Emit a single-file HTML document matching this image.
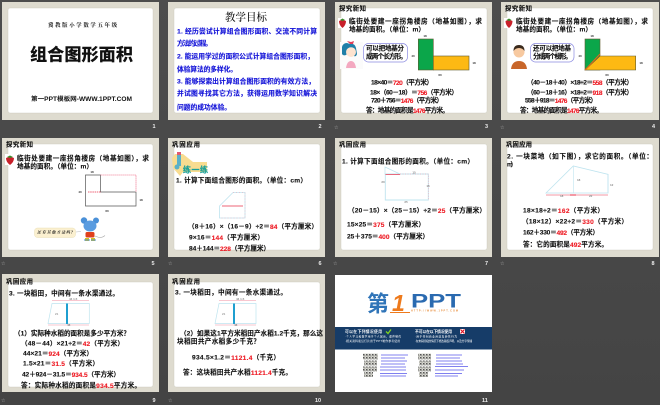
<!DOCTYPE html>
<html lang="zh"><head><meta charset="utf-8"><title>组合图形面积</title>
<style>
html,body{margin:0;padding:0;background:#484848;width:660px;height:405px;overflow:hidden}
svg{display:block;filter:blur(.3px)}
text{dominant-baseline:central;font-family:"Liberation Serif","Noto Serif CJK SC",serif;font-weight:700;fill:#111}
.s{font-family:"Liberation Sans","Noto Sans CJK SC",sans-serif}
.t{font-size:6.6px;font-family:"Liberation Sans","Noto Sans CJK SC",sans-serif;stroke:#111;stroke-width:.12px}
.h{font-size:6.4px;font-family:"Liberation Sans","Noto Sans CJK SC",sans-serif;stroke:#111;stroke-width:.12px}
.b{font-size:6.8px;fill:#1414d8;font-family:"Liberation Sans","Noto Sans CJK SC",sans-serif;stroke:#1414d8;stroke-width:.12px}
.n{font-family:"Liberation Sans",sans-serif;font-size:5.5px;fill:#eee}
.st{font-family:"Liberation Sans",sans-serif;font-size:5px;fill:#bbb;font-weight:400}
.l{font-size:3px;font-family:"Liberation Sans",sans-serif;fill:#333}
.r{fill:#ee1c25;stroke:#ee1c25}
.w{fill:#fff;font-family:"Liberation Sans","Noto Sans CJK SC",sans-serif}
</style></head><body>
<svg xmlns="http://www.w3.org/2000/svg" width="660" height="405" viewBox="0 0 660 405">
<defs><linearGradient id="bg" x1="0" y1="0" x2="0" y2="1"><stop offset="0" stop-color="#4d4d4d"/><stop offset="1" stop-color="#444"/></linearGradient>
<pattern id="qr" width="3" height="3" patternUnits="userSpaceOnUse"><rect width="3" height="3" fill="#d8d8d0"/><rect width="1.500" height="1.500" fill="#555"/><rect x="1.500" y="1.500" width="1" height="1" fill="#777"/></pattern></defs>
<rect width="660" height="405" fill="url(#bg)"/>
<!-- frames -->
<g fill="#dedbcf">
<rect x="2" y="2" width="157" height="118"/><rect x="168" y="2" width="157" height="118"/><rect x="335" y="2" width="157" height="118"/><rect x="501" y="2" width="158" height="118"/>
<rect x="2" y="138" width="157" height="119"/><rect x="168" y="138" width="157" height="119"/><rect x="335" y="138" width="157" height="119"/><rect x="501" y="138" width="158" height="119"/>
<rect x="2" y="274" width="157" height="118"/><rect x="168" y="274" width="157" height="118"/>
</g>
<g fill="#fff" stroke="#c9c6ba" stroke-width=".4">
<rect x="8" y="8" width="145" height="105" rx="2"/><rect x="174" y="8" width="146" height="105" rx="2"/><rect x="341" y="8" width="146" height="105" rx="2"/><rect x="507" y="8" width="146" height="105" rx="2"/>
<rect x="8" y="144" width="145" height="106" rx="2"/><rect x="174" y="144" width="146" height="106" rx="2"/><rect x="341" y="144" width="146" height="106" rx="2"/><rect x="507" y="144" width="146" height="106" rx="2"/>
<rect x="8" y="282" width="145" height="105" rx="2"/><rect x="174" y="282" width="146" height="105" rx="2"/>
</g>
<rect x="335" y="275" width="157" height="117" fill="#fff"/>
<!-- Slide 1 -->
<text x="48" y="26" font-size="5.4" textLength="69" lengthAdjust="spacing">冀教版小学数学五年级</text>
<text class="s" x="30" y="55" font-size="17" textLength="103" lengthAdjust="spacingAndGlyphs" style="font-weight:900">组合图形面积</text>
<text class="s" x="31" y="100" font-size="6" textLength="101" lengthAdjust="spacingAndGlyphs" fill="#222">第一PPT模板网-WWW.1PPT.COM</text>
<!-- Slide 2 -->
<text x="225" y="18" font-size="10.5" textLength="42" fill="#222" style="font-weight:500">教学目标</text>
<text class="b" x="177" y="32" textLength="140">1. 经历尝试计算组合图形面积、交流不同计算</text>
<text class="b" x="177" y="44" textLength="35">方法的过程。</text>
<text class="b" x="177" y="57" textLength="137">2. 能运用学过的面积公式计算组合图形面积，</text>
<text class="b" x="177" y="70" textLength="60">体验算法的多样化。</text>
<text class="b" x="177" y="82" textLength="138">3. 能够探索出计算组合图形面积的有效方法，</text>
<text class="b" x="177" y="94" textLength="140">并试图寻找其它方法，获得运用数学知识解决</text>
<text class="b" x="177" y="108" textLength="54">问题的成功体验。</text>
<!-- Slide 3 -->
<text class="h" x="339" y="9" textLength="27">探究新知</text>
<rect x="338" y="18" width="9" height="10" fill="#fff"/><path d="M339 21q3.500-2 7 0q0 4-3.500 7q-3.500-3-3.500-7z" fill="#c8202a"/><path d="M340 20l2.500-1.500l2.500 1.500l-2.500 1z" fill="#3a8a2a"/>
<text class="t" x="349" y="22" textLength="133">临街处要建一座拐角楼房（地基如图），求</text>
<text class="t" x="349" y="30" textLength="76">地基的面积。（单位：m）</text>
<rect x="340" y="42" width="23" height="27" fill="#fbfbfb"/>
<path d="M342 47q1-4 5-4l3 1q5-1 6 4l1 6q-1 3-3 2l-1-3q-2 1-5 0l-2 2q-3 1-4-1z" fill="#1f7fa8"/>
<circle cx="351" cy="52" r="5" fill="#fde3cf"/><path d="M346 50q4-5 10-1q-1-4-5-4t-5 5z" fill="#1f7fa8"/>
<path d="M350 44l-3-3l4 1l3-1l-1 3z" fill="#e0405a"/><path d="M346 68q1-7 5-7t5 7z" fill="#f3a8c0"/>
<rect x="363.500" y="43.500" width="44" height="18.500" rx="5" fill="#fff" stroke="#8a8ae0" stroke-width=".7"/>
<text class="t" x="366" y="49" textLength="38" font-size="6">可以把地基分</text>
<text class="t" x="366" y="57" textLength="41">成两个长方形。</text>
<rect x="418.300" y="39" width="15" height="31" fill="#0ba64a" stroke="#5f5a30" stroke-width=".6"/>
<rect x="433.300" y="56" width="35.700" height="14" fill="#fdb913" stroke="#5f5a30" stroke-width=".6"/>
<text class="l" x="425" y="36" text-anchor="middle">18</text><text class="l" x="413" y="56" text-anchor="middle">40</text><text class="l" x="474" y="63" text-anchor="middle">18</text><text class="l" x="440" y="75" text-anchor="middle">60</text>
<text class="t" x="371" y="83" textLength="62">18×40＝<tspan class="r">720</tspan>（平方米）</text>
<text class="t" x="370" y="93" textLength="88">18×（60－18）＝<tspan class="r">756</tspan>（平方米）</text>
<text class="t" x="371" y="101" textLength="72">720＋756＝<tspan class="r">1476</tspan>（平方米）</text>
<text class="t" x="366" y="111" textLength="83">答：地基的面积是<tspan class="r">1476</tspan>平方米。</text>
<!-- Slide 4 -->
<text class="h" x="505" y="9" textLength="27">探究新知</text>
<rect x="504" y="18" width="10" height="10" fill="#fff"/><path d="M505.500 21q3.500-2 7 0q0 4-3.500 7q-3.500-3-3.500-7z" fill="#c8202a"/><path d="M506.500 20l2.500-1.500l2.500 1.500l-2.500 1z" fill="#3a8a2a"/>
<text class="t" x="516" y="22" textLength="132">临街处要建一座拐角楼房（地基如图），求</text>
<text class="t" x="516" y="30" textLength="76">地基的面积。（单位：m）</text>
<circle cx="519" cy="52" r="5.500" fill="#f7c9a0"/><path d="M513.500 51q0-6 5.500-6t5.500 6q-2-3-5.500-3t-5.500 3z" fill="#3a2a1c"/><path d="M511 69q1-8 8-8t8 8z" fill="#c8662a"/>
<rect x="530.500" y="43.500" width="43.500" height="18.500" rx="5" fill="#fff" stroke="#8a8ae0" stroke-width=".7"/>
<text class="t" x="533" y="49" textLength="38">还可以把地基</text>
<text class="t" x="533" y="57" textLength="39">分成两个梯形。</text>
<rect x="585" y="39" width="15" height="31" fill="#0ba64a" stroke="#5f5a30" stroke-width=".6"/>
<path d="M600 56H635.700V70H585z" fill="#fdb913" stroke="#5f5a30" stroke-width=".6"/><path d="M600 54L585 70" stroke="#e06a1c" stroke-width="1.200"/>
<text class="l" x="592" y="36" text-anchor="middle">18</text><text class="l" x="580" y="56" text-anchor="middle">40</text><text class="l" x="641" y="63" text-anchor="middle">18</text><text class="l" x="607" y="75" text-anchor="middle">60</text>
<text class="t" x="527" y="83" textLength="106">（40－18＋40）×18÷2＝<tspan class="r">558</tspan>（平方米）</text>
<text class="t" x="527" y="93" textLength="106">（60－18＋16）×18÷2＝<tspan class="r">918</tspan>（平方米）</text>
<text class="t" x="525" y="101" textLength="72">558＋918＝<tspan class="r">1476</tspan>（平方米）</text>
<text class="t" x="520" y="111" textLength="83">答：地基的面积是<tspan class="r">1476</tspan>平方米。</text>
<!-- Slide 5 -->
<text class="h" x="6" y="145" textLength="27">探究新知</text>
<rect x="5" y="154" width="10" height="11" fill="#fff"/><path d="M6 158q4-2 8 0q0 4-4 7q-4-3-4-7z" fill="#c8202a"/><path d="M7 157l3-1.500l3 1.500l-3 1z" fill="#3a8a2a"/>
<text class="t" x="17" y="159" textLength="132">临街处要建一座拐角楼房（地基如图），求</text>
<text class="t" x="17" y="167" textLength="76">地基的面积。（单位：m）</text>
<path d="M85.500 175H100.500V192H136V206H85.500z" fill="#fff" stroke="#555" stroke-width=".7"/>
<path d="M100.500 175H136V192" fill="none" stroke="#f0708a" stroke-width=".8" stroke-dasharray="1.200 .8"/>
<path d="M88 192H100.500" stroke="#e8304a" stroke-width=".7" stroke-dasharray="1.500 .7"/>
<text class="l" x="92" y="172" text-anchor="middle">18</text><text class="l" x="80" y="192" text-anchor="middle">40</text><text class="l" x="141" y="200" text-anchor="middle">18</text><text class="l" x="107" y="211" text-anchor="middle">60</text>
<rect x="34.500" y="228" width="41" height="9.500" rx="3" fill="#fbf0d0" stroke="#e5d8a8" stroke-width=".4"/>
<text x="37" y="232.700" font-size="3.900" textLength="36" style="font-style:italic" fill="#555">还有其他方法吗?</text>
<path d="M76 232l5-.5" stroke="#bbb" stroke-width=".5"/>
<circle cx="84" cy="220.500" r="3.200" fill="#4a90d8"/><circle cx="96" cy="220.500" r="3" fill="#4a90d8"/><ellipse cx="90" cy="226" rx="6.500" ry="5.500" fill="#5a9ce0"/>
<rect x="85.500" y="232" width="9" height="5.500" rx="1.500" fill="#e0401c"/><path d="M85 238h4v3h-4zM91 238h4v3h-4z" fill="#d8c020"/>
<path d="M84 240h6M91 240h5" stroke="#4a90d8" stroke-width="1"/><path d="M95 236q6 3 10-.5" fill="none" stroke="#aaa" stroke-width=".6"/>
<!-- Slide 6 -->
<text class="h" x="172" y="145" textLength="28">巩固应用</text>
<path d="M172 158l3-4h8l10 8h14v10h-24l-3 4l-7-8z" fill="#f8dc90"/>
<path d="M177 152h4v14h-4z" fill="#5ab0c8"/><path d="M177 152h4v3h-4z" fill="#e05a70"/><circle cx="177" cy="167" r="2.500" fill="#5ab0c8"/>
<text x="183" y="170" font-size="8" textLength="25" style="fill:#1aa09a;stroke:#1aa09a;stroke-width:.2px" class="s">练一练</text>
<text class="t" x="176" y="181" textLength="131">1. 计算下面组合图形的面积。（单位：cm）</text>
<path d="M219.500 206L233 192.500H245V218H219.500z" fill="#fff" stroke="#bfe4ef" stroke-width=".8"/>
<path d="M233 192.500H245V218H219.500" fill="none" stroke="#f0a0b0" stroke-width=".5" stroke-dasharray="1 2"/>
<path d="M222 206H243" stroke="#e8304a" stroke-width=".8"/>
<text class="t" x="188" y="227" textLength="130">（8＋16）×（16－9）÷2＝<tspan class="r">84</tspan>（平方厘米）</text>
<text class="t" x="189" y="238" textLength="75">9×16＝<tspan class="r">144</tspan>（平方厘米）</text>
<text class="t" x="189" y="249" textLength="81">84＋144＝<tspan class="r">228</tspan>（平方厘米）</text>
<!-- Slide 7 -->
<text class="h" x="339" y="145" textLength="27">巩固应用</text>
<text class="t" x="342" y="162" textLength="132">1. 计算下面组合图形的面积。（单位：cm）</text>
<path d="M385 167L400 174H385z" fill="#fff" stroke="#bfe4ef" stroke-width=".7"/>
<path d="M385.300 174H428.300V200H385.300z" fill="#fff" stroke="#bfe4ef" stroke-width=".9"/>
<path d="M400 174H428.300V200" fill="none" stroke="#f08fa0" stroke-width=".5" stroke-dasharray="1 1.500"/><path d="M385.500 174.500H400" stroke="#e8304a" stroke-width=".7"/>
<text class="l" x="414" y="172.500" text-anchor="middle" style="fill:#888">15</text><text class="l" x="383" y="182" text-anchor="middle" style="fill:#888">20</text><text class="l" x="428" y="186" text-anchor="middle" style="fill:#888">15</text><text class="l" x="406" y="202" text-anchor="middle" style="fill:#888">25</text>
<text class="t" x="348" y="211" textLength="138">（20－15）×（25－15）÷2＝<tspan class="r">25</tspan>（平方厘米）</text>
<text class="t" x="347" y="225" textLength="78">15×25＝<tspan class="r">375</tspan>（平方厘米）</text>
<text class="t" x="347" y="237" textLength="82">25＋375＝<tspan class="r">400</tspan>（平方厘米）</text>
<!-- Slide 8 -->
<text class="h" x="506" y="145" textLength="26">巩固应用</text>
<text class="t" x="507" y="157" textLength="146">2. 一块菜地（如下图），求它的面积。（单位：</text>
<text class="t" x="507" y="165" textLength="10">m）</text>
<path d="M546 193L573.300 166L608 174.300V193z" fill="#fff" stroke="#bfe4ef" stroke-width=".8"/>
<path d="M573.300 166V193M608 174V193" stroke="#bfe4ef" stroke-width=".6"/>
<path d="M546 195H608" stroke="#e8304a" stroke-width=".5"/><path d="M570 195H576" stroke="#e8304a" stroke-width="1"/>
<text class="l" x="577" y="180" style="fill:#888">18</text><text class="l" x="610" y="185" style="fill:#888">12</text><text class="l" x="560" y="196" style="fill:#888">18</text><text class="l" x="589" y="196" style="fill:#888">22</text>
<text class="t" x="523" y="211" textLength="81">18×18÷2＝<tspan class="r">162</tspan>（平方米）</text>
<text class="t" x="522" y="222" textLength="106">（18×12）×22÷2＝<tspan class="r">330</tspan>（平方米）</text>
<text class="t" x="523" y="233" textLength="76">162＋330＝<tspan class="r">492</tspan>（平方米）</text>
<text class="t" x="523" y="245" textLength="85">答：它的面积是<tspan class="r">492</tspan>平方米。</text>
<!-- Slide 9 -->
<text class="h" x="6" y="282" textLength="27">巩固应用</text>
<text class="t" x="9" y="294" textLength="110">3. 一块稻田，中间有一条水渠通过。</text>
<path d="M52 303.500H89.300V323.500H48z" fill="#fff" stroke="#bfe4ef" stroke-width=".7"/>
<path d="M52 300.500H89" stroke="#f08fa0" stroke-width=".5"/><path d="M48 325H89" stroke="#f08fa0" stroke-width=".5"/>
<rect x="66" y="303.500" width="2" height="20.500" fill="#1f9fd0"/>
<text class="l" x="55" y="314" style="fill:#999">21</text><text class="l" x="69" y="299" style="fill:#888">44 1.5</text><text class="l" x="67" y="324.800" style="fill:#888">48</text>
<text class="t" x="14" y="334" textLength="116">（1）实际种水稻的面积是多少平方米？</text>
<text class="t" x="21" y="344" textLength="103">（48－44）×21÷2＝<tspan class="r">42</tspan>（平方米）</text>
<text class="t" x="23" y="354" textLength="70">44×21＝<tspan class="r">924</tspan>（平方米）</text>
<text class="t" x="23" y="364" textLength="76">1.5×21＝<tspan class="r">31.5</tspan>（平方米）</text>
<text class="t" x="22" y="375" textLength="98">42＋924－31.5＝<tspan class="r">934.5</tspan>（平方米）</text>
<text class="t" x="21" y="386" textLength="120">答：实际种水稻的面积是<tspan class="r">934.5</tspan>平方米。</text>
<!-- Slide 10 -->
<text class="h" x="172" y="282" textLength="28">巩固应用</text>
<text class="t" x="175" y="293" textLength="112">3. 一块稻田，中间有一条水渠通过。</text>
<path d="M219 303.500H256V323.500H215z" fill="#fff" stroke="#bfe4ef" stroke-width=".7"/>
<path d="M219 300.500H256" stroke="#f08fa0" stroke-width=".5"/><path d="M215 325H256" stroke="#f08fa0" stroke-width=".5"/>
<rect x="233" y="303.500" width="2" height="20.500" fill="#1f9fd0"/>
<text class="l" x="222" y="314" style="fill:#999">21</text><text class="l" x="236" y="299" style="fill:#888">44 1.5</text><text class="l" x="234" y="324.800" style="fill:#888">48</text>
<text class="t" x="180" y="334" textLength="143">（2）如果这1平方米稻田产水稻1.2千克，那么这</text>
<text class="t" x="177" y="342" textLength="83">块稻田共产水稻多少千克？</text>
<text class="t" x="192" y="358" textLength="88">934.5×1.2＝<tspan class="r">1121.4</tspan>（千克）</text>
<text class="t" x="183" y="373" textLength="109">答：这块稻田共产水稻<tspan class="r">1121.4</tspan>千克。</text>
<!-- Slide 11 -->
<text class="s" x="367" y="304" font-size="22" textLength="22" lengthAdjust="spacingAndGlyphs" style="fill:#2f74b8;font-weight:700">第</text>
<text class="s" x="392" y="303" font-size="23" style="fill:#ee7a1c;font-style:italic">1</text>
<path d="M390 312.500H410" stroke="#ee7a1c" stroke-width="1"/>
<text class="s" x="411" y="302" font-size="19" textLength="50" lengthAdjust="spacingAndGlyphs" style="fill:#2a6ab0;font-weight:700">PPT</text>
<text class="s" x="411" y="311" font-size="2.500" textLength="47" style="fill:#e89040">HTTP://WWW.1PPT.COM</text>
<rect x="335" y="327" width="157" height="22.500" fill="#163c68"/>
<text class="w" x="345" y="332" font-size="3.800" textLength="37">可以在下列情况使用</text>
<path d="M386 331.500l2 2l3-4" fill="none" stroke="#7ed321" stroke-width="1.300"/>
<text class="w" x="345" y="337" font-size="2.700" textLength="56" style="font-weight:400">·个人学习和教学用于个人展示，课件制作</text>
<text class="w" x="345" y="341.500" font-size="2.700" textLength="55" style="font-weight:400">·相关资料和幻灯片用于PPT制作参考使用</text>
<text class="w" x="415" y="332" font-size="3.800" textLength="37">不可以在以下情况使用</text>
<rect x="460" y="329" width="5" height="5" fill="#fff"/><path d="M460.500 329.500l4 4m0-4l-4 4" stroke="#e01020" stroke-width="1.200"/>
<text class="w" x="415" y="337" font-size="2.700" textLength="42" style="font-weight:400">·用于任何商业用途及转售行为</text>
<text class="w" x="415" y="341.500" font-size="2.700" textLength="57" style="font-weight:400">·在未获授权的情况下修改版权声明，以及分享传播</text>
<g fill="url(#qr)">
<rect x="363" y="353.500" width="15" height="6"/><rect x="364" y="360.500" width="13" height="5"/><rect x="363" y="366.500" width="14" height="5"/><rect x="364" y="372" width="9" height="5"/>
<rect x="418" y="353.500" width="13" height="6"/><rect x="419" y="360.500" width="12" height="5"/><rect x="418" y="366.500" width="13" height="5"/><rect x="419" y="372" width="9" height="5"/>
</g>
<g stroke="#3a3ae8" stroke-width=".8" opacity=".85">
<path d="M381 355H408M381 358H405M381 361H407M381 364H405M380 367H406M380 370H406M380 373.500H407M380 376H406"/>
<path d="M436 355H462M436 358H460M436 361H462M436 364H463M435 366.500H468M435 370H464M435 373.500H462M435 376H458"/>
</g>
<!-- footers -->
<text class="st" x="334" y="128">☆</text><text class="st" x="500" y="128">☆</text>
<text class="st" x="1" y="264">☆</text><text class="st" x="168" y="264">☆</text><text class="st" x="333" y="264">☆</text><text class="st" x="500" y="264">☆</text>
<text class="st" x="1" y="401">☆</text><text class="st" x="168" y="401">☆</text>
<g class="nums">
<text class="n" x="152.500" y="127">1</text><text class="n" x="318.500" y="127">2</text><text class="n" x="485" y="127">3</text><text class="n" x="652" y="127">4</text>
<text class="n" x="151.500" y="264">5</text><text class="n" x="318.500" y="264">6</text><text class="n" x="485" y="264">7</text><text class="n" x="651.500" y="264">8</text>
<text class="n" x="152.500" y="401">9</text><text class="n" x="315" y="401">10</text><text class="n" x="482" y="401">11</text>
</g>
</svg>
</body></html>
